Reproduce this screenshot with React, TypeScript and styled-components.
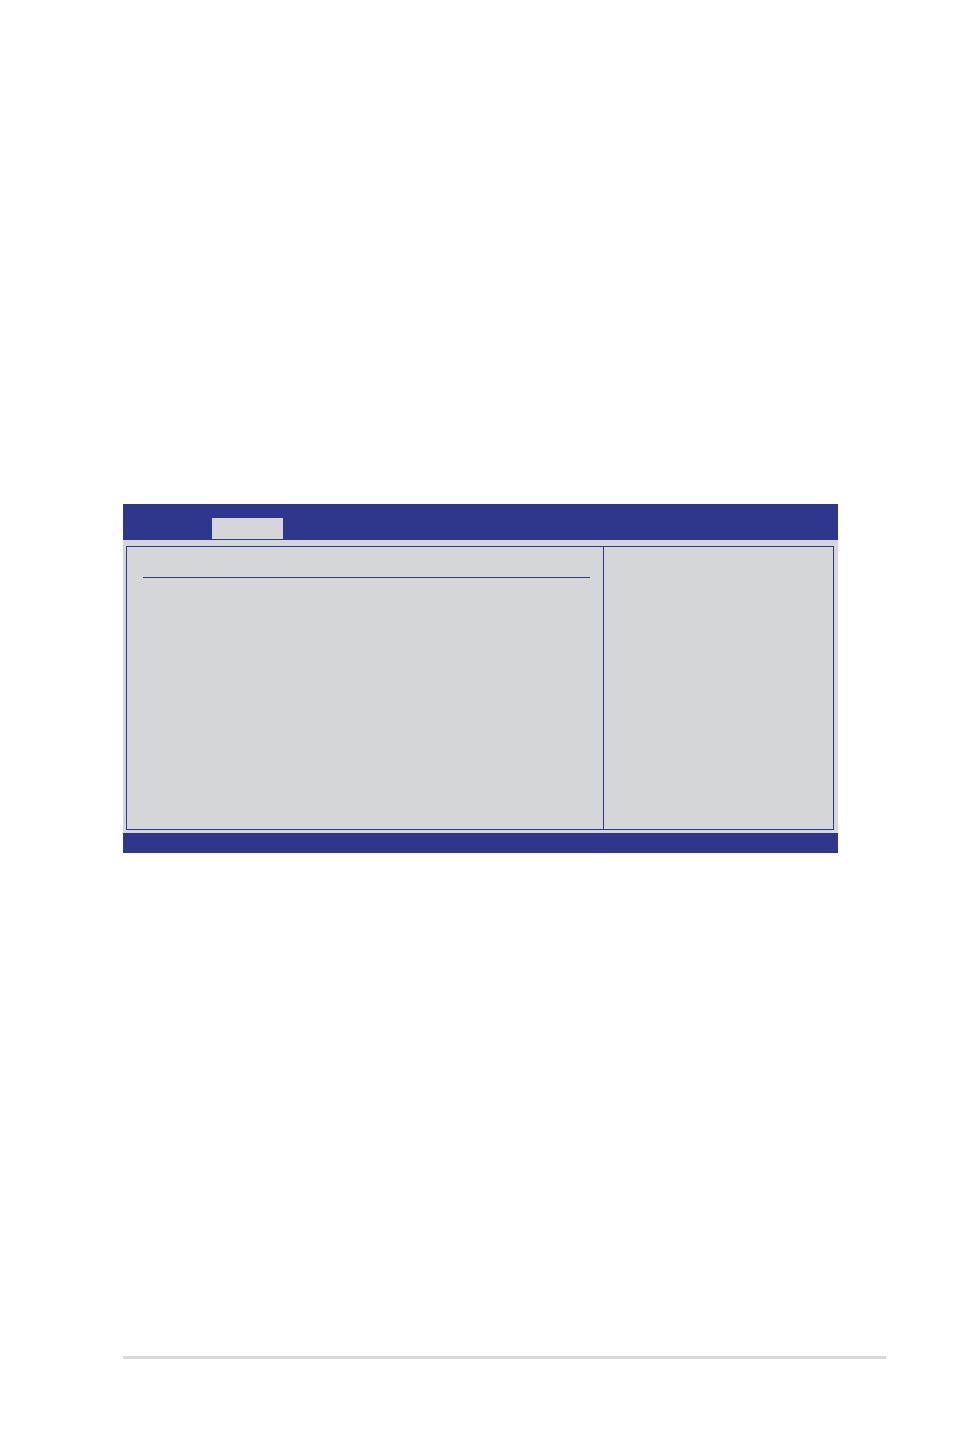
import React from "react";
import styled, { createGlobalStyle } from "styled-components";

const blue = "#2e378c";
const grey = "#d5d6d8";

const GlobalStyle = createGlobalStyle`
  *, *::before, *::after { box-sizing: border-box; }
  body {
    margin: 0;
    background: #ffffff;
    font-family: "Liberation Sans", sans-serif;
  }
`;

const Page = styled.main`
  display: flex;
  flex-direction: column;
  min-height: 100vh;
  padding: 504px 68px 78px 123px;
`;

const SetupScreen = styled.section`
  display: flex;
  flex-direction: column;
  margin-right: 48px;
  background: ${grey};
`;

const MenuBar = styled.header`
  display: flex;
  align-items: flex-end;
  height: 36px;
  padding: 0 89px 1px;
  background: ${blue};
`;

const ActiveTab = styled.div`
  width: 71px;
  height: 21px;
  background: ${grey};
`;

const ScreenBody = styled.div`
  padding: 6px 4px 3px 3px;
`;

const Frame = styled.div`
  display: flex;
  min-height: 284px;
  border: 1px solid ${blue};
`;

const SettingsPane = styled.div`
  flex: 1;
  padding: 30px 13px 16px 16px;
`;

const HeadingRule = styled.hr`
  height: 1px;
  margin: 0;
  border: 0;
  background: ${blue};
`;

const HelpPane = styled.aside`
  flex: 0 0 230px;
  border-left: 1px solid ${blue};
`;

const StatusBar = styled.footer`
  height: 20px;
  background: ${blue};
`;

const PageRule = styled.hr`
  width: 100%;
  height: 3px;
  margin: auto 0 0;
  border: 0;
  background: #d9d9d9;
`;

export default function App() {
  return (
    <>
      <GlobalStyle />
      <Page>
        <SetupScreen>
          <MenuBar>
            <ActiveTab />
          </MenuBar>
          <ScreenBody>
            <Frame>
              <SettingsPane>
                <HeadingRule />
              </SettingsPane>
              <HelpPane />
            </Frame>
          </ScreenBody>
          <StatusBar />
        </SetupScreen>
        <PageRule />
      </Page>
    </>
  );
}
